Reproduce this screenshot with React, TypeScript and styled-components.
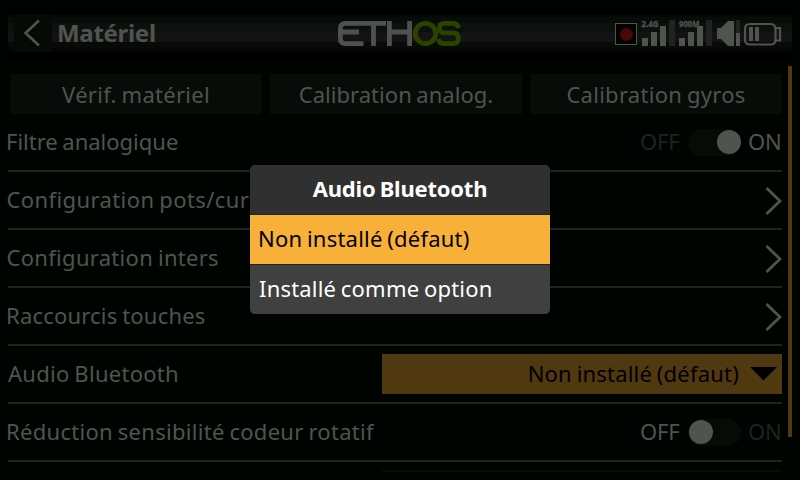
import React from "react";
import styled, { createGlobalStyle } from "styled-components";

const ink = "#50544f";
const faint = "#1f231f";
const panel = "#080c08";
const line = "#202420";
const amber = "#503810";

const Global = createGlobalStyle`
  * { box-sizing: border-box; }
  body { margin: 0; background: #000400; overflow: hidden; }
`;

const Screen = styled.div`
  position: relative;
  width: 800px;
  height: 480px;
  overflow: hidden;
  display: flex;
  flex-direction: column;
  background: #000400;
  color: ${ink};
  font: 22px/30px "Noto Sans", sans-serif;
`;

const Header = styled.header`
  height: 66px;
  padding: 8px 8px 7px;
  flex: none;
`;

const Bar = styled.div`
  height: 51px;
  padding: 6px 0 7px 6px;
  display: grid;
  grid-template-columns: 324px 130px 1fr;
  background: linear-gradient(
    #000 0 7px, #040806 7px 9px, #080c08 9px 15px, #0d110d 15px 24px, #131313 24px 34px,
    #080a08 34px 40px, #040604 40px 43px, #000 43px
  );
`;

const TitleGroup = styled.div`
  display: flex;
`;

const BackButton = styled.button`
  width: 38px;
  height: 38px;
  padding: 0;
  border: 0;
  background: #060a07;
  color: inherit;
`;

const Title = styled.h1`
  margin: 4px 0 0 5px;
  font-size: 24px;
  line-height: 30px;
  font-weight: 700;
  letter-spacing: -0.3px;
`;

const Icon = styled.svg`
  display: block;
  flex: none;
`;

const Status = styled.div`
  display: flex;
  justify-content: flex-end;
`;

const Content = styled.div`
  display: flex;
  height: 406px;
  padding: 0 8px;
  gap: 6px;
  overflow: hidden;
`;

const List = styled.main`
  width: 774px;
  padding-top: 8px;
`;

const Tabs = styled.div`
  display: grid;
  grid-template-columns: repeat(3, 252px);
  gap: 8px;
  padding-left: 2px;
`;

const Action = styled.button`
  height: 40px;
  padding: 0;
  border: 0;
  background: ${panel};
  color: inherit;
  font: inherit;
`;

const Row = styled.div`
  height: 58px;
  display: flex;
  align-items: center;
  justify-content: space-between;
  border-bottom: 2px solid ${line};
`;

const Text = styled.span<{ $ls?: number; $x?: number }>`
  white-space: nowrap;
  word-spacing: -1.2px;
  letter-spacing: ${(p) => p.$ls ?? 0.28}px;
  margin-left: ${(p) => p.$x ?? 0}px;
  padding-bottom: 3px;
`;

const Switch = styled.div`
  display: flex;
  align-items: center;
  justify-content: space-between;
  width: 142px;
`;

const State = styled.span<{ $active: boolean }>`
  width: ${(p) => (p.children === "ON" ? 34 : 40)}px;
  padding-bottom: 3px;
  color: ${(p) => (p.$active ? ink : faint)};
  letter-spacing: -0.2px;
`;

const Track = styled.div<{ $on: boolean }>`
  display: flex;
  align-items: center;
  justify-content: ${(p) => (p.$on ? "flex-end" : "flex-start")};
  width: 53px;
  height: 27px;
  margin-left: 1px;
  padding-left: 1px;
  border-radius: 14px;
  background: #070b07;
`;

const Knob = styled.div`
  width: 24px;
  height: 24px;
  border-radius: 50%;
  background: ${ink};
`;

const Select = styled.div`
  display: flex;
  align-items: center;
  justify-content: flex-end;
  gap: 11px;
  width: 400px;
  height: 40px;
  padding-right: 5px;
  background: ${amber};
  color: #000;
`;

const NextField = styled.div`
  width: 400px;
  height: 40px;
  margin: 8px 0 0 374px;
  background: ${panel};
`;

const Scrollbar = styled.div`
  width: 4px;
  height: 371px;
  background: ${amber};
`;

const Dialog = styled.section`
  position: absolute;
  left: 250px;
  top: 165px;
  width: 300px;
  height: 149px;
  display: grid;
  grid-template-rows: 49px 49px 49px;
  gap: 1px;
  overflow: hidden;
  border-radius: 5px;
  background: #202420;
  color: #fff;
`;

const DialogTitle = styled.h2`
  display: flex;
  align-items: center;
  justify-content: center;
  margin: 0;
  background: #303030;
  font-size: 22px;
  font-weight: 700;
`;

const Option = styled.div<{ $selected?: boolean }>`
  display: flex;
  align-items: center;
  padding-left: 8px;
  background: ${(p) => (p.$selected ? "#f8b038" : "#404040")};
  color: ${(p) => (p.$selected ? "#000" : "#fff")};
`;

const Tiny = styled.text`
  font: 700 9px "Noto Sans", sans-serif;
  fill: ${ink};
  stroke: ${ink};
  stroke-width: 0.3px;
`;

function Chevron() {
  return (
    <Icon width="18" height="30" viewBox="0 0 18 30" fill="none" stroke={ink} strokeWidth="2.8">
      <path d="M2.5 3 16 16 2.5 29" />
    </Icon>
  );
}

function Toggle({ on }: { on: boolean }) {
  return (
    <Switch>
      <State $active={!on}>OFF</State>
      <Track $on={on}><Knob /></Track>
      <State $active={on}>ON</State>
    </Switch>
  );
}

function Logo() {
  return (
    <Icon width="130" height="38" viewBox="338 14 130 38" fill="none" stroke="#505050" strokeWidth="4.8">
      <path d="M386 23.4H345.5Q340.4 23.4 340.4 28.5V38.5Q340.4 43.6 345.5 43.6H363.5M340.4 32H359" />
      <path d="M373.5 23.4V46M389.4 21V46M409.6 21V46M389.4 32H409.6" />
      <g stroke="#2a4400">
        <ellipse cx="425.5" cy="33.5" rx="10.2" ry="10.1" />
        <path d="M458.5 28Q457.5 23.4 453 23.4H444.5Q439.5 23.4 439.5 28.1Q439.5 32.8 444.5 32.8H453Q458.3 32.8 458.3 38.2Q458.3 43.6 453 43.6H444Q439 43.6 438.5 39" />
      </g>
    </Icon>
  );
}

function StatusIcons() {
  return (
    <Icon width="192" height="38" viewBox="600 14 192 38">
      <rect x="615.5" y="23.5" width="21" height="21" fill="#000400" stroke={ink} />
      <circle cx="626.5" cy="34.5" r="6.5" fill="#480808" />
      <path d="M669 20h6v26h-6zM706 20h6v26h-6zM736 20h4v13h-4z" fill={line} />
      <g fill={ink}>
        <path d="M642 38h6v8h-6zM651 32h6v14h-6zM660 26h6v20h-6zM679 38h6v8h-6zM688 32h6v14h-6zM697 26h6v20h-6z" />
        <path d="M717 28h4l7-7h6v25h-6l-7-7h-4zM736 33h4v13h-4zM749 27h4v14h-4zM755 27h4v14h-4z" />
      </g>
      <Tiny x="641.5" y="26.5" textLength="17" lengthAdjust="spacingAndGlyphs">2.4G</Tiny>
      <Tiny x="679" y="26.5" textLength="20.5" lengthAdjust="spacingAndGlyphs">900M</Tiny>
      <path d="M750 24H770.5Q775.5 24 775.5 29V39.5Q775.5 44.5 770.5 44.5H750Q745 44.5 745 39.5V29Q745 24 750 24ZM776 28H780V40.5H776" fill="none" stroke={ink} strokeWidth="2.2" />
    </Icon>
  );
}

export default function App() {
  return (
    <>
      <Global />
      <Screen>
        <Header>
          <Bar>
            <TitleGroup>
              <BackButton aria-label="Retour">
                <Icon width="38" height="38" viewBox="0 0 38 38" fill="none" stroke={ink} strokeWidth="2.6">
                  <path d="M25 6.5 11.5 19 25 31.5" />
                </Icon>
              </BackButton>
              <Title>Matériel</Title>
            </TitleGroup>
            <Logo />
            <Status><StatusIcons /></Status>
          </Bar>
        </Header>
        <Content>
          <List>
            <Tabs>
              <Action><Text>Vérif. matériel</Text></Action>
              <Action><Text $ls={0.03}>Calibration analog.</Text></Action>
              <Action><Text>Calibration gyros</Text></Action>
            </Tabs>
            <Row><Text $x={-2} $ls={0}>Filtre analogique</Text><Toggle on /></Row>
            <Row><Text $x={-1.5} $ls={0.4}>Configuration pots/curseurs</Text><Chevron /></Row>
            <Row><Text $x={-1.5} $ls={0.3}>Configuration inters</Text><Chevron /></Row>
            <Row><Text $x={-2} $ls={0.2}>Raccourcis touches</Text><Chevron /></Row>
            <Row>
              <Text>Audio Bluetooth</Text>
              <Select>
                <Text $ls={0.2}>Non installé (défaut)</Text>
                <Icon width="27" height="14" viewBox="0 0 27 14"><path d="M0 0H27L13.5 13.5Z" /></Icon>
              </Select>
            </Row>
            <Row><Text $x={-2} $ls={0.29}>Réduction sensibilité codeur rotatif</Text><Toggle on={false} /></Row>
            <NextField />
          </List>
          <Scrollbar />
        </Content>
        <Dialog role="dialog">
          <DialogTitle><Text $ls={-0.22}>Audio Bluetooth</Text></DialogTitle>
          <Option $selected><Text $ls={0.21}>Non installé (défaut)</Text></Option>
          <Option><Text $x={1} $ls={0.19}>Installé comme option</Text></Option>
        </Dialog>
      </Screen>
    </>
  );
}
